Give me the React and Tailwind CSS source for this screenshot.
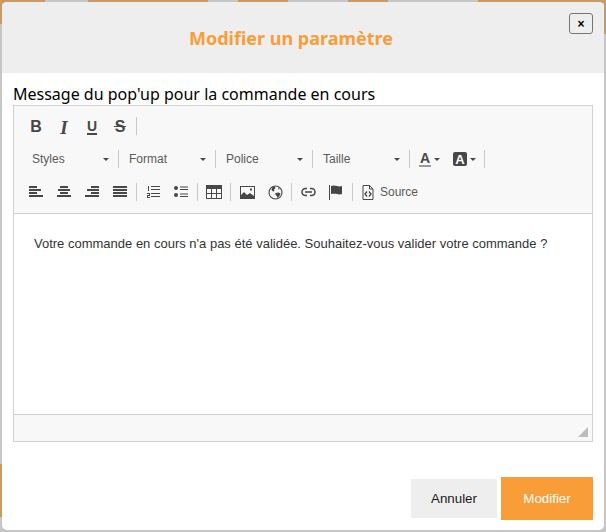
import React from "react";

const ICON = "#474747";

function Sep() {
  return <span className="mx-[2px] h-[18px] w-px shrink-0 bg-[#c8c8c8]" />;
}

function Arrow({ className = "" }) {
  return <span className={`h-0 w-0 border-x-[3px] border-t-[3px] border-x-transparent border-t-[#474747] ${className}`} />;
}

function Btn({ children }) {
  return <span className="flex h-7 w-7 shrink-0 items-center justify-center">{children}</span>;
}

function Combo({ label }) {
  return (
    <span className="flex h-7 w-[92px] shrink-0 items-center justify-between pl-2 pr-[7px] text-[12px] text-[#5a5a5a]">
      <span>{label}</span>
      <Arrow />
    </span>
  );
}

function Lines({ rows }) {
  return (
    <svg width="16" height="16" viewBox="0 0 16 16">
      {rows.map(([x, w], i) => (
        <rect key={i} x={x} y={2 + i * 3} width={w} height="2" fill={ICON} />
      ))}
    </svg>
  );
}

function ColorBtn({ children, className = "" }) {
  return (
    <span className={`flex h-7 w-[35px] shrink-0 items-center ${className}`}>
      {children}
      <Arrow className="ml-[3px]" />
    </span>
  );
}

export default function App() {
  return (
    <div className="relative h-[532px] w-[606px] overflow-hidden bg-[#c6c6c6] p-[2px] font-['Noto_Sans',sans-serif]">
      {/* what shows of the page behind the dialog */}
      <div className="absolute inset-x-0 top-0 flex h-[3px] bg-[#c99a66]">
        <span className="ml-[45px] w-[43px] bg-[#c6c6c6]" />
        <span className="ml-[120px] w-[30px] bg-[#c6c6c6]" />
        <span className="ml-[50px] w-[60px] bg-[#c6c6c6]" />
        <span className="ml-[40px] w-[90px] bg-[#c6c6c6]" />
      </div>
      <div className="absolute left-0 top-0 h-[24px] w-[2px] bg-[#c99a66]" />
      <div className="absolute right-0 top-0 h-[34px] w-[2px] bg-[#c99a66]" />
      <div className="absolute left-0 top-[464px] h-[53px] w-[2px] bg-[#c99a66]" />

      <div className="relative flex h-[528px] flex-col overflow-hidden rounded-[5px] bg-white">
        <div className="relative flex h-[71px] shrink-0 items-center justify-center bg-[#eeeeee] pr-[24px]">
          <h1 className="text-[18px] font-bold leading-none text-[#f99d38]">Modifier un paramètre</h1>
          <button className="absolute right-[11px] top-[11px] flex h-[21px] w-[24px] items-center justify-center rounded-[3px] border border-[#757575] font-['Liberation_Sans',sans-serif] text-[12px] font-bold leading-none text-black">
            ×
          </button>
        </div>

        <div className="flex flex-1 flex-col px-[11px]">
          <label className="mt-[9px] h-[23px] text-[16px] leading-[25px] text-black">Message du pop'up pour la commande en cours</label>

          <div className="flex h-[337px] flex-col border border-[#d1d1d1] font-['Liberation_Sans',sans-serif]">
            <div className="flex h-[108px] shrink-0 flex-col gap-[5px] border-b border-[#d1d1d1] bg-[#f8f8f8] pl-[8px] pt-[6px]">
              <div className="flex h-7 items-center">
                <Btn><span className="pt-[2px] text-[16px] font-bold leading-none text-[#474747]">B</span></Btn>
                <Btn><span className="pt-[2px] font-['Liberation_Serif',serif] text-[19px] font-bold italic leading-none text-[#474747]">I</span></Btn>
                <Btn><span className="mt-[2px] border-b-2 border-[#474747] text-[14px] font-bold leading-[14px] text-[#474747]">U</span></Btn>
                <Btn>
                  <span className="relative pt-[2px] text-[16px] font-bold leading-none text-[#474747]">
                    S
                    <span className="absolute -inset-x-[1px] top-[9px] h-px bg-[#474747]" />
                  </span>
                </Btn>
                <Sep />
              </div>

              <div className="flex h-7 items-center pl-[2px]">
                <Combo label="Styles" />
                <Sep />
                <Combo label="Format" />
                <Sep />
                <Combo label="Police" />
                <Sep />
                <Combo label="Taille" />
                <Sep />
                <ColorBtn className="pl-[7px]">
                  <span className="border-b-2 border-[#9a9a9a] px-[1px] text-[14px] font-bold leading-[14px] text-[#474747]">A</span>
                </ColorBtn>
                <ColorBtn className="pl-[6px]">
                  <span className="flex h-[14px] w-[14px] items-center justify-center rounded-[2px] bg-[#474747] text-[13px] font-bold leading-none text-white">A</span>
                </ColorBtn>
                <Sep />
              </div>

              <div className="flex h-7 items-center">
                <Btn><Lines rows={[[1, 8], [1, 12], [1, 8], [1, 14]]} /></Btn>
                <Btn><Lines rows={[[4, 8], [2, 12], [4, 8], [1, 14]]} /></Btn>
                <Btn><Lines rows={[[7, 8], [3, 12], [7, 8], [1, 14]]} /></Btn>
                <Btn><Lines rows={[[1, 14], [1, 14], [1, 14], [1, 14]]} /></Btn>
                <Sep />
                <Btn>
                  <svg width="16" height="16" viewBox="0 0 16 16" fill={ICON}>
                    <rect x="3" y="2" width="1" height="5" />
                    <rect x="2" y="9" width="3" height="1" />
                    <rect x="4" y="10" width="1" height="1" />
                    <rect x="2" y="11" width="3" height="1" />
                    <rect x="2" y="12" width="1" height="1" />
                    <rect x="2" y="13" width="3" height="1" />
                    <rect x="6" y="2" width="9" height="1" />
                    <rect x="6" y="5" width="9" height="1" />
                    <rect x="6" y="9" width="9" height="1" />
                    <rect x="6" y="12" width="9" height="1" />
                  </svg>
                </Btn>
                <Btn>
                  <svg width="16" height="16" viewBox="0 0 16 16" fill={ICON}>
                    <circle cx="3" cy="4" r="2" />
                    <circle cx="3" cy="11" r="2" />
                    <rect x="7" y="2.5" width="8" height="1" />
                    <rect x="7" y="5" width="8" height="1" />
                    <rect x="7" y="9.5" width="8" height="1" />
                    <rect x="7" y="12" width="8" height="1" />
                  </svg>
                </Btn>
                <Sep />
                <Btn>
                  <svg width="16" height="14" viewBox="0 0 16 14">
                    <rect x="0.5" y="0.5" width="15" height="13" fill="none" stroke={ICON} />
                    <rect x="0" y="0" width="16" height="4" fill={ICON} />
                    <path d="M5.5 4v9M10.5 4v9M0 8.5h16" stroke={ICON} />
                  </svg>
                </Btn>
                <Sep />
                <Btn>
                  <svg width="15" height="13" viewBox="0 0 15 13">
                    <rect x="0.5" y="0.5" width="14" height="12" fill="none" stroke={ICON} />
                    <path d="M1 12V9l3-3 3 3 3-2 4 3v2z" fill={ICON} />
                    <rect x="10" y="2.5" width="2" height="2" fill={ICON} />
                  </svg>
                </Btn>
                <Btn>
                  <svg width="15" height="15" viewBox="0 0 15 15">
                    <circle cx="7.5" cy="7.5" r="6.5" fill="none" stroke={ICON} strokeWidth="1.1" />
                    <path d="M4 2.5l2.5-1 1 1.5-1.5 1.5L6.5 6 5 6.5 3.5 5zM7.5 8l3-.5 2 1-1 2.5-2 2-.8-2-1.4-1.5zM10 2.5l2 1.5-1.5.5z" fill={ICON} />
                  </svg>
                </Btn>
                <Sep />
                <Btn>
                  <svg width="15" height="10" viewBox="0 0 15 10" fill="none" stroke={ICON}>
                    <path d="M6 1.5H4.5a3.5 3.5 0 0 0 0 7H6M9 1.5h1.5a3.5 3.5 0 0 1 0 7H9" strokeWidth="1.5" />
                    <path d="M4 5h7" strokeWidth="1.5" />
                  </svg>
                </Btn>
                <Btn>
                  <svg width="14" height="15" viewBox="0 0 14 15" fill={ICON}>
                    <rect x="0" y="0" width="1" height="15" />
                    <path d="M2 1c2-1 4-.5 6 0s3 .5 5 0v8c-2 .5-3 .5-5 0s-4-.5-6 0z" />
                  </svg>
                </Btn>
                <Sep />
                <span className="flex h-7 items-center pl-[7px] text-[12px] text-[#5a5a5a]">
                  <svg width="12" height="15" viewBox="0 0 12 15" fill="none" stroke={ICON}>
                    <path d="M1 .5h6.5l3.5 3.5v10.5H1z" />
                    <path d="M7.5 .5V4H11" />
                    <path d="M5 6.5L3 9l2 2.5M7 6.5L9 9l-2 2.5" strokeWidth="1.3" />
                  </svg>
                  <span className="ml-[6px]">Source</span>
                </span>
              </div>
            </div>

            <div className="flex-1 bg-white px-5 py-[20px] text-[13px] leading-[20px] text-[#333333]">
              Votre commande en cours n'a pas été validée. Souhaitez-vous valider votre commande ?
            </div>

            <div className="relative h-[27px] shrink-0 border-t border-[#d1d1d1] bg-[#f8f8f8]">
              <svg className="absolute bottom-[4px] right-[4px]" width="10" height="10" viewBox="0 0 10 10">
                <path d="M10 0v10H0z" fill="#bdbdbd" />
              </svg>
            </div>
          </div>

          <div className="mt-[35px] flex items-center justify-end gap-1 font-['Liberation_Sans',sans-serif] text-[13.33px]">
            <button className="h-[39px] w-[86px] bg-[#eeeeee] text-[#1a1a1a]">Annuler</button>
            <button className="h-[43px] w-[92px] bg-[#f99d38] text-white">Modifier</button>
          </div>
        </div>
      </div>
    </div>
  );
}
